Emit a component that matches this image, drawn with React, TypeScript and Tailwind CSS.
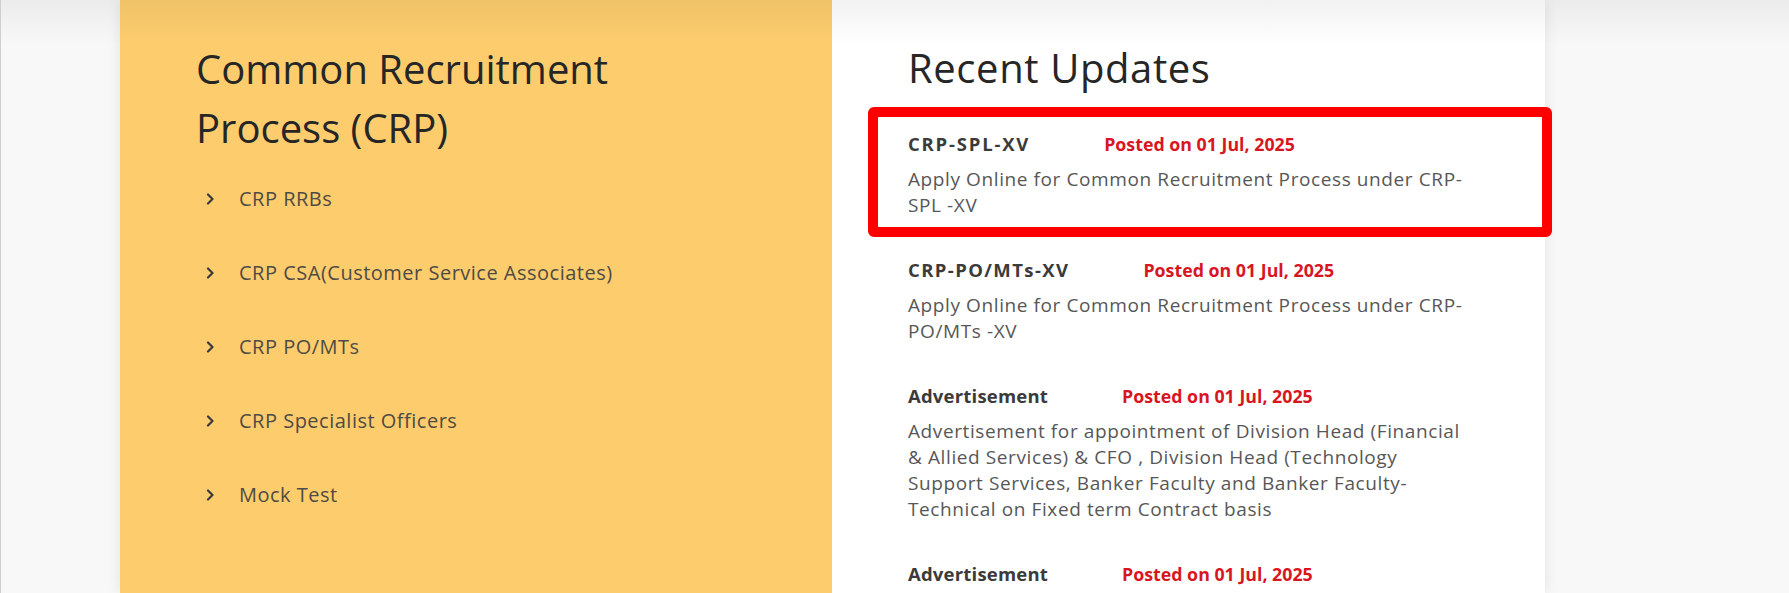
import React from "react";

const menu = [
  "CRP RRBs",
  "CRP CSA(Customer Service Associates)",
  "CRP PO/MTs",
  "CRP Specialist Officers",
  "Mock Test",
];

type Item = { title: string; lines: string[]; boxed?: boolean; track: string };
const items: Item[] = [
  {
    title: "CRP-SPL-XV",
    lines: ["Apply Online for Common Recruitment Process under CRP-", "SPL -XV"],
    boxed: true,
    track: "tracking-[1.8px]",
  },
  {
    title: "CRP-PO/MTs-XV",
    lines: ["Apply Online for Common Recruitment Process under CRP-", "PO/MTs -XV"],
    track: "tracking-[1.4px]",
  },
  {
    title: "Advertisement",
    lines: [
      "Advertisement for appointment of Division Head (Financial",
      "& Allied Services) & CFO , Division Head (Technology",
      "Support Services, Banker Faculty and Banker Faculty-",
      "Technical on Fixed term Contract basis",
    ],
    track: "tracking-[0.2px]",
  },
  {
    title: "Advertisement",
    lines: [],
    track: "tracking-[0.2px]",
  },
];

function Chevron() {
  return (
    <svg width="10" height="12" viewBox="0 0 10 12" className="shrink-0">
      <polyline
        points="3,1.5 7.5,6 3,10.5"
        fill="none"
        stroke="#3a3a3a"
        strokeWidth="2.2"
        strokeLinecap="round"
        strokeLinejoin="round"
      />
    </svg>
  );
}

function UpdateBody({ it }: { it: Item }) {
  return (
    <>
      <div className="flex items-center h-[26px] mb-[9px]">
        <span className={`mr-[74px] font-bold text-[18.5px] text-[#3b3b3b] whitespace-nowrap ${it.track}`}>
          {it.title}
        </span>
        <span className="font-bold text-[17.8px] text-[#d8161f] whitespace-nowrap">Posted on 01 Jul, 2025</span>
      </div>
      {it.lines.length > 0 && (
        <p className="text-[19px] tracking-[0.6px] leading-[26px] text-[#575757] whitespace-nowrap">
          {it.lines.map((l, i) => (
            <React.Fragment key={i}>
              {l}
              {i < it.lines.length - 1 && <br />}
            </React.Fragment>
          ))}
        </p>
      )}
    </>
  );
}

export default function App() {
  return (
    <div className="relative h-[593px] w-full overflow-hidden bg-[#f8f8f8] border-l border-[#cfcfcf] font-['Open_Sans',sans-serif]">
      <div className="flex h-full">
        <div className="w-[119px] shrink-0" />
        <div className="flex shadow-[0_0_14px_rgba(0,0,0,0.09)]">
          {/* Yellow panel */}
          <div className="w-[712px] bg-[#fdcd6d] pl-[76px] pt-[39px]">
            <h2 className="text-[40px] leading-[59px] text-[#262626] w-[460px]">
              Common Recruitment Process (CRP)
            </h2>
            <ul className="mt-[5px] flex flex-col">
              {menu.map((m) => (
                <li key={m} className="flex items-center h-[74px] pl-[9px] gap-[24px]">
                  <Chevron />
                  <span className="text-[20px] tracking-[0.5px] text-[#4e4b44]">{m}</span>
                </li>
              ))}
            </ul>
          </div>
          {/* White panel */}
          <div className="w-[713px] bg-white pl-[76px] pt-[44px]">
            <h2 className="text-[40px] tracking-[0.6px] leading-[48px] text-[#262626]">Recent Updates</h2>
            <div className="mt-[15px] flex flex-col">
              {items.map((it, i) =>
                it.boxed ? (
                  <div
                    key={i}
                    className="-ml-[40px] w-[684px] border-[10px] border-[#ff0000] rounded-[6px] pl-[30px] pt-[14px] pb-[9px] mb-[20px]"
                  >
                    <UpdateBody it={it} />
                  </div>
                ) : (
                  <div key={i} className="mb-[39px]">
                    <UpdateBody it={it} />
                  </div>
                )
              )}
            </div>
          </div>
        </div>
        <div className="flex-1" />
      </div>
      <div className="pointer-events-none absolute inset-x-0 top-0 h-[45px] bg-gradient-to-b from-[rgba(0,0,0,0.05)] to-transparent" />
    </div>
  );
}
